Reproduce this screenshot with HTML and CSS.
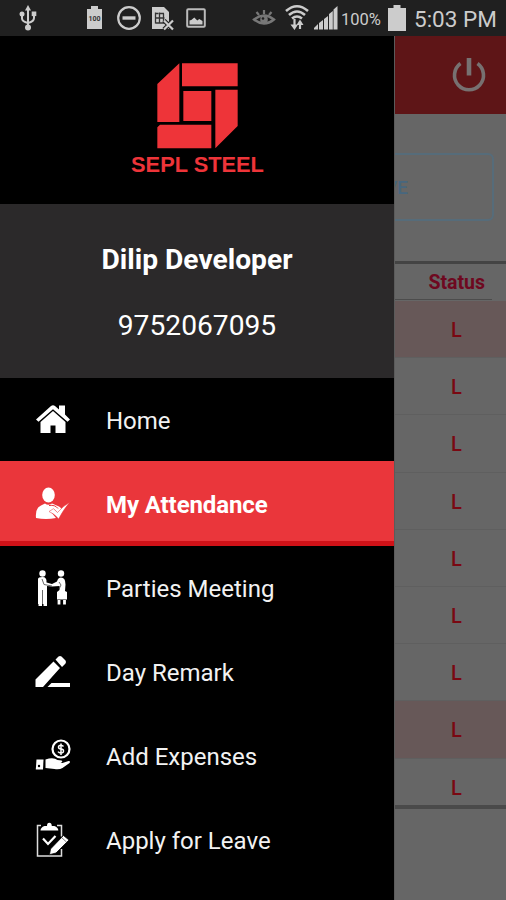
FILE: index.html
```html
<!DOCTYPE html>
<html lang="en">
<head>
    <meta charset="UTF-8">
    <meta name="viewport" content="width=device-width, initial-scale=1.0">
    <title>SEPL Steel - My Attendance</title>
    <link rel="stylesheet" href="styles.css">
</head>
<body>
    <div class="status-bar">
        <svg class="usb-icon" width="20" height="28" viewBox="0 0 20 28">
            <path d="M10 4v19M4 11v3.500q0 3 6 4.500q6-1.500 6-5V10" fill="none" stroke="#ccc" stroke-width="2"/>
            <path d="M7 6.500L10 1l3 5.500z" fill="#ccc"/>
            <circle cx="4" cy="10" r="2.500" fill="#ccc"/>
            <rect x="13.700" y="7.500" width="4.600" height="4.600" fill="#ccc"/>
            <circle cx="10" cy="23.500" r="3" fill="#ccc"/>
        </svg>
        <svg class="battery-small" width="18" height="26" viewBox="0 0 18 26">
            <path d="M5 1h7v3h4v20H1V4h4z" fill="#ccc"/>
            <text x="8.500" y="15.500" text-anchor="middle" class="battery-text">100</text>
        </svg>
        <svg class="block-icon" width="26" height="26" viewBox="0 0 26 26">
            <circle cx="13" cy="13" r="10.800" fill="none" stroke="#ccc" stroke-width="2.200"/>
            <path d="M6.500 13h13" stroke="#ccc" stroke-width="3.400"/>
        </svg>
        <svg class="sim-icon" width="24" height="26" viewBox="0 0 24 26">
            <path d="M1 2h12l5 5v17H1z" fill="#ccc"/>
            <path d="M4.500 7.500v11M8.500 7.500v11M12.500 8.500v10M4.500 8.500h3M4.500 13h9M9 8.500h4M4.500 18h9" stroke="#333" stroke-width="1.300" fill="none"/>
            <path d="M13 15.500l9 9M22 15.500l-9 9" stroke="#202020" stroke-width="4.500"/>
            <path d="M13 15.500l9 9M22 15.500l-9 9" stroke="#ccc" stroke-width="2.200"/>
        </svg>
        <svg class="image-icon" width="20" height="20" viewBox="0 0 20 20">
            <rect x="1.200" y="1.200" width="17.600" height="17.600" rx="1" fill="#202020" stroke="#bbb" stroke-width="2"/>
            <path d="M3.500 12.500l1.800-.5 3-2.500 3 3 2-1.500 3.200 2v3.500h-13z" fill="#ccc"/>
        </svg>
        <svg class="eye-icon" width="24" height="18" viewBox="0 0 24 18">
            <path d="M2 10.500Q12 2.500 22 10.500Q12 18.500 2 10.500z" fill="none" stroke="#777" stroke-width="2.300"/>
            <circle cx="12" cy="10.500" r="3.800" fill="#777"/>
            <circle cx="11" cy="9.500" r="1.300" fill="#202020"/>
            <path d="M12 1v4M4.500 3l2.500 3M19.500 3L17 6" stroke="#777" stroke-width="2.200"/>
        </svg>
        <svg class="wifi-icon" width="26" height="28" viewBox="0 0 26 28">
            <path d="M2 7Q13-2.500 24 7M5 11Q13 4 21 11M8 14.500Q13 10.500 18 14.500" fill="none" stroke="#ccc" stroke-width="2.600"/>
            <path d="M10.500 15v8M16 17v8" stroke="#ccc" stroke-width="2.200"/>
            <path d="M6.500 20.500h7.500L10.500 26zM12.500 21L16 15.500l3.500 5.500z" fill="#ccc"/>
        </svg>
        <svg class="signal-icon" width="24" height="24" viewBox="0 0 24 24">
            <path d="M0 23.500v-1.500l4-4v5.500zM5 23.500v-6.500l4-3v9.500zM10 23.500v-10.500l4-3v13.500zM15 23.500V8l3.800-3v18.500zM19.500 23.500V3.500L23.500 0v23.500z" fill="#ccc"/>
        </svg>
        <span class="battery-percent">100%</span>
        <svg class="battery-icon" width="18" height="26" viewBox="0 0 18 26">
            <path d="M5.500 0h7v3H18v23H0V3h5.500z" fill="#ccc"/>
        </svg>
        <span class="time">5:03 PM</span>
    </div>

    <div class="screen">
        <div class="drawer">
            <div class="logo">
                <svg width="81" height="86" viewBox="111 41 243 258">
                    <path d="M178 42V218H112V104zM186 42H353V111H186zM286 121H353V230L286 297zM112 234L120 226H274V297H112zM190 125H274V215H190z" fill="#ee3439"/>
                </svg>
                <div class="logo-name">SEPL STEEL</div>
            </div>
            <div class="profile">
                <div class="name">Dilip Developer</div>
                <div class="phone">9752067095</div>
            </div>
            <ul class="menu">
                <li class="menu-item">
                    <svg width="36" height="36" viewBox="0 0 36 36">
                        <path d="M1 17.500L16 4q2-1.500 4 0l4 3.500V3.500h6v9L35 17.500l-2.500 2.300L18 7.200 3.500 19.800z" fill="#fff"/>
                        <path d="M5.500 20L18 9l12.500 11v11H20.500v-7.500h-5V31h-10z" fill="#fff"/>
                    </svg>
                    <span>Home</span>
                </li>
                <li class="menu-item active">
                    <svg width="36" height="36" viewBox="0 0 36 36">
                        <ellipse cx="13.500" cy="9" rx="6.300" ry="7.500" fill="#fff"/>
                        <path d="M1 32q-1-10 5-12.500l4-2q3 2.500 7 0l7 3q2 1 2.500 3l-4 3.500-3-3.500-3.500 2.500 5 6q-10 2-20 0z" fill="#fff"/>
                        <path d="M14 25.500l4.500-2.800 4 3.800Q28 20 34.500 16.500q-6 7-11 16.500Q20 28 14 25.500z" fill="#fff" stroke="#ea363b" stroke-width=".5"/>
                        <path d="M14 19.500q6-1 9 3" stroke="#ea363b" stroke-width="1" fill="none"/>
                    </svg>
                    <span>My Attendance</span>
                </li>
                <li class="menu-item">
                    <svg width="36" height="36" viewBox="0 0 36 36">
                        <circle cx="7.500" cy="3.500" r="3.200" fill="#fff"/>
                        <circle cx="26" cy="3.500" r="3.200" fill="#fff"/>
                        <path d="M3 9q0-2 4.500-2t4 5.500l5.500 1.500 5-2.500q1-4 4-4 4.500 0 4.500 7l-.5 6.500 2 1v7.500h-10v-7.500l2.500-2v-4l-7.500.500-5-.5V34H3z" fill="#fff"/>
                        <path d="M7.500 20v14M7 9l2 5.500 8 1.500M24 12l2 3-2 4" stroke="#444" stroke-width=".8" fill="none"/>
                        <path d="M24 30v4.500M29.500 30v4.500M3.500 34.500h3.500M8.500 34.500h3.500" stroke="#fff" stroke-width="2.800"/>
                    </svg>
                    <span>Parties Meeting</span>
                </li>
                <li class="menu-item">
                    <svg width="36" height="36" viewBox="0 0 36 36">
                        <path d="M.5 33V25.500L18.500 7.500l6.500 6.500L8 33zM20.500 5.500L23.500 2.500q1.500-1 3 0l4 4q1 1.500 0 3l-3.500 3.500zM12.500 33l4-4h18.500V33z" fill="#fff"/>
                    </svg>
                    <span>Day Remark</span>
                </li>
                <li class="menu-item">
                    <svg width="36" height="36" viewBox="0 0 36 36">
                        <circle cx="26" cy="11" r="8.500" fill="none" stroke="#fff" stroke-width="2.200"/>
                        <path d="M28.500 8.500q-1-1.300-2.500-1.300-2.500 0-2.500 1.900t2.500 2 2.500 2-2.500 1.900q-2 0-3-1.400M26 5.500v11.500" stroke="#fff" stroke-width="1.500" fill="none"/>
                        <path d="M1.500 21.500h7L8 31.500H.8z" fill="#fff"/>
                        <path d="M10.500 21.500q8-2.500 12 .5l4 .5q2 1.500-1 2.500h-6 8l6-2q2.500 0 1 2l-7 5q-3 1.800-8 1l-9-1z" fill="#fff"/>
                        <circle cx="4" cy="28" r="1.200" fill="#000"/>
                    </svg>
                    <span>Add Expenses</span>
                </li>
                <li class="menu-item">
                    <svg width="36" height="36" viewBox="0 0 36 36">
                        <path d="M6 3.500H2.500V34h24V27M22 3.500h4.500v11" fill="none" stroke="#ddd" stroke-width="1.500"/>
                        <path d="M5.500 8.500q0-3 4-4.500h2.500Q12 .8 14.300.8T16.800 4h2.500q4 1.500 4 4.500z" fill="#fff"/>
                        <path d="M8 16.500l5 5.500 7.500-8" fill="none" stroke="#fff" stroke-width="2.200"/>
                        <path d="M15.500 27L28.500 13.500l5.500 4.500L21 31l-6.500 1.700z" fill="#fff" stroke="#000" stroke-width=".8"/>
                        <path d="M26.500 15.500l5 4.500" stroke="#444" stroke-width=".7"/>
                    </svg>
                    <span>Apply for Leave</span>
                </li>
            </ul>
        </div>

        <div class="page">
            <div class="app-bar">
                <svg width="36" height="36" viewBox="0 0 36 36">
                    <path d="M9.500 6.500a14.500 14.500 0 1 0 17 0" fill="none" stroke="#777171" stroke-width="3.600"/>
                    <path d="M18 1v17.500" stroke="#777171" stroke-width="4.600"/>
                </svg>
            </div>
            <div class="actions">
                <div class="leave-button">VE</div>
            </div>
            <div class="table">
                <div class="table-head"><span>Status</span></div>
                <div class="row absent">L</div>
                <div class="row">L</div>
                <div class="row">L</div>
                <div class="row">L</div>
                <div class="row">L</div>
                <div class="row">L</div>
                <div class="row">L</div>
                <div class="row absent">L</div>
                <div class="row">L</div>
            </div>
        </div>
    </div>
</body>
</html>
```
FILE: styles.css
```css
* {
    box-sizing: border-box;
}
body {
    margin: 0;
    width: 506px;
    height: 900px;
    overflow: hidden;
    background-color: #000;
    font-family: Roboto, sans-serif;
}
.status-bar {
    display: flex;
    align-items: center;
    height: 36px;
    background-color: #202020;
    color: #ccc;
}
.status-bar svg {
    flex: none;
}
.usb-icon {
    margin-left: 18px;
}
.battery-small {
    margin-left: 48px;
}
.battery-text {
    font-size: 7px;
    font-weight: bold;
    fill: #333;
}
.block-icon {
    margin-left: 12px;
}
.sim-icon {
    margin-left: 9px;
}
.image-icon {
    margin-left: 11px;
}
.eye-icon {
    margin-left: 46px;
}
.wifi-icon {
    margin-left: 8px;
}
.signal-icon {
    margin-left: 4px;
}
.battery-percent {
    width: 50px;
    padding: 2px 0 0 3px;
    font-size: 16.5px;
    white-space: nowrap;
}
.time {
    margin-left: 8px;
    padding-top: 2px;
    font-size: 22.5px;
    white-space: nowrap;
}
.screen {
    display: flex;
    height: 864px;
}
.drawer {
    flex: none;
    width: 394px;
    background-color: #000;
    color: #fff;
}
.logo {
    display: flex;
    flex-direction: column;
    align-items: center;
    height: 168px;
    padding-top: 27px;
}
.logo-name {
    margin-top: 3px;
    padding-left: 1px;
    font-family: "Liberation Sans", sans-serif;
    font-size: 21.8px;
    font-weight: bold;
    line-height: 26px;
    color: #ee3439;
}
.profile {
    height: 174px;
    padding-top: 37px;
    background-color: #2b292a;
    text-align: center;
}
.name {
    font-size: 28.2px;
    font-weight: bold;
    line-height: 38px;
}
.phone {
    margin-top: 28px;
    font-size: 28.2px;
    line-height: 38px;
}
.menu {
    list-style: none;
    margin: 0;
    padding: 0;
}
.menu-item {
    display: flex;
    align-items: center;
    gap: 35px;
    height: 84px;
    padding-left: 35px;
    font-size: 24px;
    color: #f2f2f2;
}
.menu-item span {
    padding-top: 2px;
}
.menu-item:first-child {
    height: 83px;
}
.menu-item.active {
    height: 85px;
    padding-top: 5px;
    background-color: #ea363b;
    border-bottom: 5px solid #d01218;
    font-weight: bold;
    letter-spacing: -0.1px;
    color: #fff;
}
.page {
    flex: 1;
    min-width: 0;
    overflow: hidden;
    background-color: #666;
    border-left: 1px solid #5b5b5b;
}
.app-bar {
    display: flex;
    align-items: center;
    justify-content: flex-end;
    height: 78px;
    padding-right: 19px;
    background-color: #5e1517;
}
.actions {
    height: 147px;
    padding: 39px 12px 0 0;
}
.leave-button {
    height: 68px;
    margin-left: -12px;
    border: 2px solid #566c7a;
    border-radius: 6px;
    font-size: 19px;
    font-weight: 500;
    line-height: 66px;
    color: #47677f;
}
.table {
    height: 548px;
    border-top: 3px solid #444;
    border-bottom: 4px solid #4a4a4a;
    overflow: hidden;
}
.table-head {
    height: 37px;
    padding-right: 14px;
    font-size: 19.5px;
    font-weight: bold;
    line-height: 38px;
    text-align: right;
    color: #6e0820;
}
.table-head span {
    display: block;
    height: 36px;
    padding-right: 7px;
    border-bottom: 1px solid #4c4c4c;
}
.row {
    height: 57.2px;
    padding-left: 12px;
    border-bottom: 1px solid #5f5f5f;
    font-size: 20px;
    font-weight: 500;
    line-height: 59px;
    text-align: center;
    color: #7a0812;
}
.row.absent {
    background-color: #675858;
}
```
